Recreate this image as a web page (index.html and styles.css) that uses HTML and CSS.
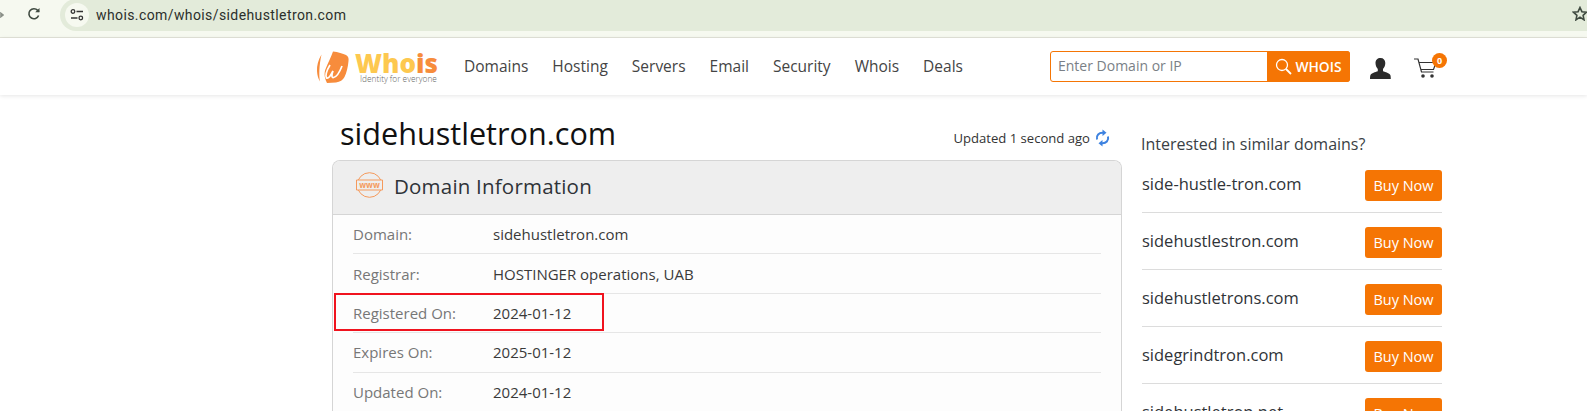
FILE: index.html
```html
<!DOCTYPE html>
<html lang="en">
<head>
<meta charset="utf-8">
<title>whois.com/whois/sidehustletron.com</title>
<link rel="stylesheet" href="styles.css">
</head>
<body>
<div class="chrome">
  <svg class="back" width="4" height="10" viewBox="0 0 4 10"><path d="M0 5h3M0 2.500L3 5 0 7.500" fill="none" stroke="#8a9088" stroke-width="1.500"/></svg>
  <svg class="reload" width="14" height="14" viewBox="0 0 14 14"><path d="M11.600 8.500A5 5 0 1 1 10.700 3.400L12 4.700" fill="none" stroke="#3f4a40" stroke-width="1.600"/><path d="M12.500 1v4.300H8.200z" fill="#3f4a40"/></svg>
  <div class="omnibox">
    <span class="tune">
      <svg width="14" height="12" viewBox="0 0 14 12"><circle cx="3" cy="2.500" r="1.800" fill="none" stroke="#333" stroke-width="1.300"/><path d="M6.500 2.500H13M1 9h6.500" stroke="#333" stroke-width="1.500"/><circle cx="10.800" cy="9" r="1.800" fill="none" stroke="#333" stroke-width="1.300"/></svg>
    </span>
    <span class="url">whois.com/whois/sidehustletron.com</span>
    <svg class="star" width="16" height="15" viewBox="0 0 16 15"><path d="M8 1.500l1.900 4.200 4.600.5-3.400 3.100.9 4.500L8 11.100l-4 2.700.9-4.500L1.500 6.200l4.600-.5z" fill="none" stroke="#3f4a40" stroke-width="1.600"/></svg>
  </div>
</div>
<header class="site-header">
  <div class="logo">
    <svg class="logo-mark" width="34" height="34" viewBox="0 0 34 34">
      <path d="M5.500 4.500C2 10 .8 16 1 21c.2 4 1.200 7.500 3 10.500C2.900 26 3 15 5.500 4.500z" fill="#f78c3c"/>
      <path d="M17 1.500C22 2 27 3.500 30 5c2 1 3 3 2.500 6-.5 6-2 12-4 16-1.500 3-4.500 5-8.500 5.500l-9 .5C8 27 8 22 10 18c2-5 5-11 7-16.500z" fill="#f78c3c"/>
      <path d="M14 15c-3 5-5 10-3.500 13 1.800 1 4-2 6.500-7-1.500 4-1.500 7 .5 6.500 3-.5 6-5 8.500-11.500" fill="none" stroke="#fff" stroke-width="1.700"/>
    </svg>
    <div class="logo-text">
      <div class="logo-word">Who<span class="logo-is">is</span></div>
      <div class="logo-tag">Identity for everyone</div>
    </div>
  </div>
  <nav class="nav">
    <a>Domains</a><a>Hosting</a><a>Servers</a><a>Email</a><a>Security</a><a>Whois</a><a>Deals</a>
  </nav>
  <form class="search">
    <span class="search-input">Enter Domain or IP</span>
    <span class="search-btn">
      <svg width="17" height="17" viewBox="0 0 17 17"><circle cx="7" cy="7" r="5.500" fill="none" stroke="#fff" stroke-width="1.300"/><path d="M11 11l5 5" stroke="#fff" stroke-width="1.800"/></svg>
      WHOIS
    </span>
  </form>
  <svg class="user" width="21" height="21" viewBox="0 0 21 21"><path d="M10.500 0c3 0 4.800 2 4.800 5 0 2.500-1 4.600-2.300 6v2.200c2.500 1 6.300 1.800 7.300 3.800.4 1 .5 2.500.5 4H0c0-1.500.1-3 .5-4 1-2 4.800-2.800 7.300-3.800V11C6.500 9.600 5.500 7.500 5.500 5c0-3 2-5 5-5z" fill="#2b2b2b"/></svg>
  <div class="cart">
    <svg width="24" height="21" viewBox="0 0 24 21"><path d="M0 1h4l3.500 13h12M5 4.500h17l-2.500 7H6.800" fill="none" stroke="#333" stroke-width="1.200"/><circle cx="9" cy="18" r="1.800" fill="#333"/><circle cx="18" cy="18" r="1.800" fill="#333"/></svg>
    <span class="badge">0</span>
  </div>
</header>
<main class="page">
  <section class="content">
    <div class="title-row">
      <h1 class="title">sidehustletron.com</h1>
      <div class="updated">Updated 1 second ago
        <svg width="15" height="18" viewBox="0 0 15 18"><path d="M2 10.500C1 6.500 4 3.500 8 3.800" fill="none" stroke="#3d82e0" stroke-width="2"/><path d="M7.500 0.500v6.500l4-3.200z" fill="#3d82e0"/><path d="M13 7.500c1 4-2 7-6 6.700" fill="none" stroke="#3d82e0" stroke-width="2"/><path d="M7.500 11v6.500l-4-3.200z" fill="#3d82e0"/></svg>
      </div>
    </div>
    <div class="panel">
      <div class="panel-head">
        <svg width="29" height="26" viewBox="0 0 29 26" class="www">
          <circle cx="14.500" cy="13" r="12.300" fill="none" stroke="#f59a5c" stroke-width="1"/>
          <path d="M1.500 8h26v10h-26z" fill="#eee" stroke="#f59a5c" stroke-width="1"/>
          <text x="14.500" y="15.800" class="www-text">www</text>
        </svg>
        <h2 class="panel-title">Domain Information</h2>
      </div>
      <div class="rows">
        <div class="row"><span class="label">Domain:</span><span class="value">sidehustletron.com</span></div>
        <div class="row"><span class="label">Registrar:</span><span class="value">HOSTINGER operations, UAB</span></div>
        <div class="row"><span class="label">Registered On:</span><span class="value">2024-01-12</span><span class="highlight"></span></div>
        <div class="row"><span class="label">Expires On:</span><span class="value">2025-01-12</span></div>
        <div class="row"><span class="label">Updated On:</span><span class="value">2024-01-12</span></div>
      </div>
    </div>
  </section>
  <aside class="side">
    <h3 class="side-title">Interested in similar domains?</h3>
    <div class="suggest"><span class="suggest-name">side-hustle-tron.com</span><a class="buy">Buy Now</a></div>
    <div class="suggest"><span class="suggest-name">sidehustlestron.com</span><a class="buy">Buy Now</a></div>
    <div class="suggest"><span class="suggest-name">sidehustletrons.com</span><a class="buy">Buy Now</a></div>
    <div class="suggest"><span class="suggest-name">sidegrindtron.com</span><a class="buy">Buy Now</a></div>
    <div class="suggest"><span class="suggest-name">sidehustletron.net</span><a class="buy">Buy Now</a></div>
  </aside>
</main>
</body>
</html>
```
FILE: styles.css
```css
* { box-sizing: border-box; }
html, body { margin: 0; height: 411px; overflow: hidden; }
body { background: #fff; font-family: "Open Sans", sans-serif; color: #333; }

.chrome { height: 38px; background: #f6f9f0; border-bottom: 1px solid #e2e3d9; display: flex; padding-bottom: 6px; align-items: stretch; }
.back { margin-top: 10px; flex: none; }
.reload { margin: 7px 0 0 23px; flex: none; }
.omnibox { flex: 1; margin-left: 19px; background: #e3ebda; border-radius: 16px 0 0 16px; display: flex; align-items: center; padding-left: 5px; margin-top: -1px; }
.tune { width: 24px; height: 24px; border-radius: 50%; background: #f6f9f0; display: flex; align-items: center; justify-content: center; }
.url { margin-left: 7px; font: 14px/1 "Roboto", sans-serif; color: #2b2f2b; letter-spacing: .4px; }
.star { margin: -4px -1px 0 auto; }

.site-header { height: 57px; background: #fff; box-shadow: 0 1px 4px rgba(0,0,0,.1); display: flex; align-items: center; padding-left: 316px; position: relative; }
.logo { width: 148px; display: flex; flex: none; align-items: flex-start; }
.logo-mark { flex: none; }
.logo-text { margin-left: 5px; padding-top: 1px; }
.logo-word { font: 800 26px/24px "Open Sans", sans-serif; color: #fdc84f; }
.logo-is { color: #f78c3c; }
.logo-tag { font: 300 8.300px/8px "Open Sans", sans-serif; color: #666; margin-left: 5px; white-space: nowrap; }
.nav { display: flex; gap: 24px; font-size: 15.500px; font-weight: 500; color: #444; width: 586px; flex: none; margin-top: -1px; }
.search { display: flex; width: 300px; height: 31px; border: 1px solid #f57504; border-radius: 3px; background: #fff; flex: none; }
.search-input { flex: 1; padding-left: 7px; font-size: 14px; line-height: 28px; color: #7a7f86; }
.search-btn { width: 83px; margin: -1px -1px -1px 0; background: #f57504; border-radius: 0 3px 3px 0; color: #fff; font-size: 13.800px; font-weight: 600; display: flex; align-items: center; justify-content: center; gap: 3px; }
.user { margin: 3px 0 0 20px; flex: none; }
.cart { position: relative; margin: 3px 0 0 23px; height: 21px; }
.badge { position: absolute; left: 18px; top: -5px; width: 15px; height: 15px; border-radius: 50%; background: #f57504; color: #fff; font-size: 9px; font-weight: 700; line-height: 15px; text-align: center; }

.page { display: flex; padding: 0 0 0 332px; }
.content { width: 790px; flex: none; }
.title-row { height: 65px; display: flex; justify-content: space-between; padding: 18px 12px 0 8px; }
.title { margin: 0; font-size: 30.600px; font-weight: 400; line-height: 40px; color: #111; }
.updated { display: flex; align-items: flex-start; gap: 5px; font-size: 13.100px; line-height: 18px; margin-top: 16px; color: #333; }
.panel { border: 1px solid #d5d5d5; border-bottom: 0; border-radius: 8px 8px 0 0; background: #fdfdfd; }
.panel-head { height: 54px; background: #eee; border-bottom: 1px solid #d5d5d5; border-radius: 7px 7px 0 0; display: flex; align-items: center; padding-left: 22px; }
.www { flex: none; margin-top: -5px; }
.www-text { font: 700 8px "Open Sans", sans-serif; fill: #f59a5c; text-anchor: middle; }
.panel-title { margin: 0 0 4px 10px; font-size: 20.500px; font-weight: 500; color: #2f3338; letter-spacing: .2px; }
.rows { padding: 0 20px; }
.row { height: 39.400px; display: flex; align-items: center; border-bottom: 1px solid #e6e6e6; font-size: 15px; position: relative; }
.label { width: 140px; color: #777; }
.value { color: #3a3a3a; }
.highlight { position: absolute; left: -19px; top: -1px; width: 270px; height: 38px; border: 2px solid #f0131e; }

.side { width: 300px; margin-left: 20px; flex: none; }
.side-title { margin: 38px 0 0 -1px; font-size: 16px; font-weight: 400; line-height: 23px; color: #3a3f45; height: 23px; }
.suggest { height: 57px; display: flex; align-items: flex-start; justify-content: space-between; border-bottom: 1px solid #dcdcdc; }
.suggest-name { font-size: 16.500px; font-weight: 500; color: #2f3338; line-height: 31px; margin-top: 12px; }
.buy { width: 77px; height: 31px; margin-top: 14px; background: #f57504; border-radius: 3px; color: #fff; font-size: 14.500px; line-height: 31px; text-align: center; flex: none; }
```
